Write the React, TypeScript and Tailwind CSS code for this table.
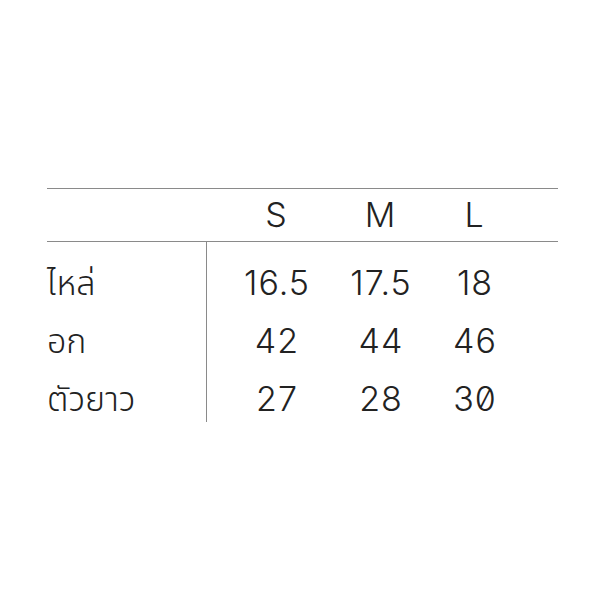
import React from "react";

const rows = [
  { label: "ไหล่", v: ["16.5", "17.5", "18"] },
  { label: "อก", v: ["42", "44", "46"] },
  { label: "ตัวยาว", v: ["27", "28", "30"] },
];

export default function App() {
  const font = { fontFamily: 'Inter, "Noto Sans", "Noto Sans Thai", sans-serif' };
  return (
    <div className="w-[600px] h-[600px] bg-white text-[#222222] pt-[188px] pl-[47px]" style={font}>
      <div className="w-[511px]">
        <div className="border-t border-b border-[#8a8a8a] h-[54px] flex items-center font-light text-[34px] leading-none">
          <div className="w-[159px]" />
          <div className="w-[140px] text-center">S</div>
          <div className="w-[68px] text-center">M</div>
          <div className="w-[120px] text-center">L</div>
        </div>
        <div className="flex font-light text-[34px] leading-none">
          <div className="w-[159px] pt-[12px]">
            {rows.map((r) => (
              <div key={r.label} className="h-[58px] flex items-center">
                {r.label}
              </div>
            ))}
          </div>
          <div className="border-l border-[#8a8a8a] pt-[12px] h-[180px] slashed-zero tracking-[1px]">
            {rows.map((r) => (
              <div key={r.label} className="h-[58px] flex items-center">
                <div className="w-[140px] text-center">{r.v[0]}</div>
                <div className="w-[68px] text-center">{r.v[1]}</div>
                <div className="w-[120px] text-center">{r.v[2]}</div>
              </div>
            ))}
          </div>
        </div>
      </div>
    </div>
  );
}
